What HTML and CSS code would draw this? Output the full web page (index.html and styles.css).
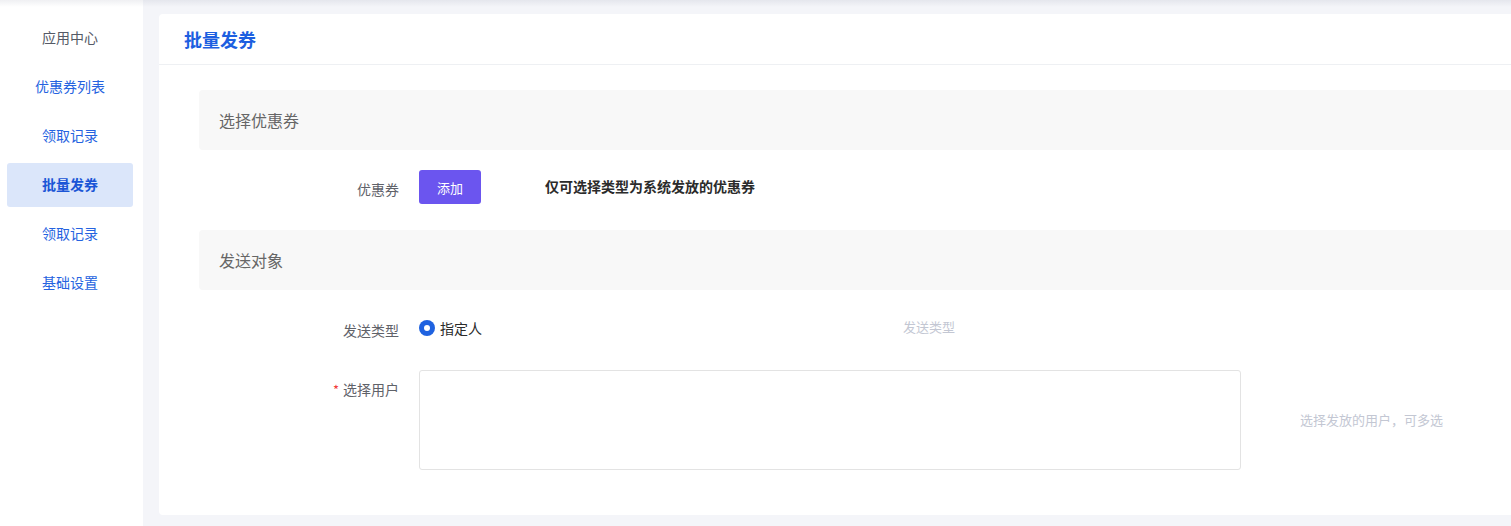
FILE: index.html
```html
<!DOCTYPE html>
<html lang="zh">
<head>
<meta charset="utf-8">
<title>批量发券</title>
<link rel="stylesheet" href="styles.css">
</head>
<body>
<div class="top-shadow"></div>
<div class="layout">
  <aside class="sidebar">
    <div class="nav-item nav-muted">应用中心</div>
    <div class="nav-item">优惠券列表</div>
    <div class="nav-item">领取记录</div>
    <div class="nav-item active">批量发券</div>
    <div class="nav-item">领取记录</div>
    <div class="nav-item">基础设置</div>
  </aside>
  <main class="main">
    <section class="card">
      <header class="card-header">批量发券</header>
      <div class="card-body">
        <div class="section-bar">选择优惠券</div>
        <div class="form-row row-coupon">
          <label class="form-label">优惠券</label>
          <div class="form-control">
            <button class="btn-primary" type="button">添加</button>
          </div>
          <div class="hint-strong">仅可选择类型为系统发放的优惠券</div>
        </div>
        <div class="section-bar">发送对象</div>
        <div class="form-row row-type">
          <label class="form-label">发送类型</label>
          <div class="form-control radio-group">
            <span class="radio"><span class="radio-dot"></span></span>
            <span class="radio-text">指定人</span>
          </div>
          <div class="hint hint-type">发送类型</div>
        </div>
        <div class="form-row row-users">
          <label class="form-label label-top"><span class="req">*</span>选择用户</label>
          <div class="form-control">
            <div class="textarea"></div>
          </div>
          <div class="hint hint-users">选择发放的用户，可多选</div>
        </div>
      </div>
    </section>
  </main>
</div>
</body>
</html>
```

FILE: styles.css
```css
* { box-sizing: border-box; }
html, body { margin: 0; padding: 0; }
body {
  font-family: "Noto Sans CJK SC", "Noto Sans", sans-serif;
  width: 1511px;
  height: 526px;
  overflow: hidden;
  background: #f4f5f9;
  position: relative;
}
.top-shadow {
  position: absolute;
  left: 0; top: 0; right: 0;
  height: 7px;
  background: linear-gradient(to bottom, rgba(30, 40, 80, 0.07), rgba(30, 40, 80, 0));
  pointer-events: none;
  z-index: 5;
}
.layout {
  display: flex;
  height: 526px;
}
.sidebar {
  width: 143px;
  flex: none;
  background: #fff;
  padding: 16px 10px 0 7px;
  display: flex;
  flex-direction: column;
  gap: 5px;
}
.nav-item {
  height: 44px;
  line-height: 42px;
  text-align: center;
  font-size: 14px;
  color: #2563e0;
  border-radius: 3px;
}
.nav-muted { color: #555a66; }
.nav-item.active {
  background: #dbe6fa;
  color: #1a55d6;
  font-weight: 700;
}
.main {
  flex: 1;
  overflow: hidden;
  padding: 14px 0 11px 16px;
}
.card {
  width: 1400px;
  height: 501px;
  background: #fff;
  border-radius: 4px;
}
.card-header {
  height: 51px;
  line-height: 50px;
  padding-left: 25px;
  font-size: 18px;
  font-weight: 700;
  color: #1d5fe0;
  border-bottom: 1px solid #eef0f3;
}
.card-body {
  padding: 25px 0 0 40px;
}
.section-bar {
  height: 60px;
  line-height: 60px;
  background: #f8f8f8;
  border-radius: 4px;
  padding-left: 20px;
  font-size: 16px;
  color: #666;
}
.form-row {
  display: flex;
  align-items: center;
}
.row-coupon { margin: 20px 0 26px; height: 34px; }
.row-type { margin: 20px 0 24px; height: 36px; }
.row-users { align-items: flex-start; }
.form-label {
  width: 220px;
  flex: none;
  padding-right: 20px;
  text-align: right;
  font-size: 14px;
  color: #5f6269;
  padding-top: 3px;
}
.label-top { padding-top: 9px; line-height: 20px; }
.req { color: #f23b3b; margin-right: 4px; font-size: 13px; }
.btn-primary {
  width: 62px;
  height: 34px;
  border: none;
  border-radius: 3px;
  background: #6b55ef;
  color: #fff;
  font-family: inherit;
  font-size: 13px;
  padding: 0;
}
.hint-strong {
  margin-left: 64px;
  font-size: 14px;
  font-weight: 700;
  color: #2b2b2b;
  margin-bottom: 2px;
}
.radio-group {
  width: 420px;
  display: flex;
  align-items: center;
}
.radio {
  width: 16px;
  height: 16px;
  border-radius: 50%;
  background: #1f62e0;
  display: flex;
  align-items: center;
  justify-content: center;
}
.radio-dot {
  width: 6px;
  height: 6px;
  border-radius: 50%;
  background: #fff;
}
.radio-text {
  margin-left: 5px;
  font-size: 14px;
  color: #2b2b2b;
}
.hint {
  margin-left: 64px;
  font-size: 13px;
  color: #c3c7d3;
}
.hint-type { margin-bottom: 3px; }
.textarea {
  width: 822px;
  height: 100px;
  border: 1px solid #e3e3e3;
  border-radius: 3px;
  background: #fff;
}
.hint-users {
  margin-left: 59px;
  margin-top: 40px;
}
```
